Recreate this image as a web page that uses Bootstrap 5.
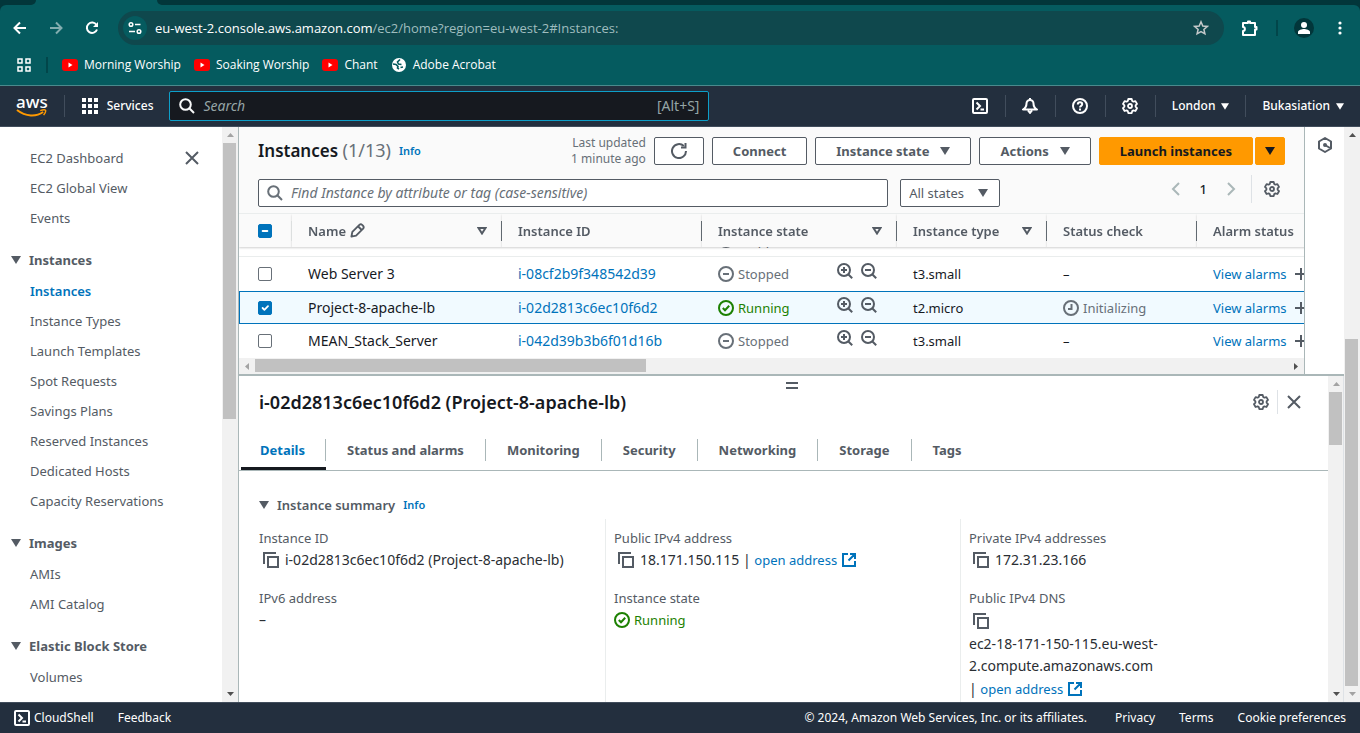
<!DOCTYPE html>
<html lang="en">
<head>
<meta charset="utf-8">
<meta name="viewport" content="width=device-width, initial-scale=1">
<title>Instances | EC2 | eu-west-2</title>
<link href="https://cdn.jsdelivr.net/npm/bootstrap@5.3.0/dist/css/bootstrap.min.css" rel="stylesheet">
<style>
:root { --ink:#16191f; --slate:#545b64; --muted:#687078; --blue:#0073bb; --line:#eaeded; --navy:#232f3e; --teal:#055b5f; --teal-dark:#02363a; }
body { font:13px/22px "Noto Sans", sans-serif; color:var(--ink); background:#fff; }
a { text-decoration:none; color:var(--blue); }
svg { flex:none; display:block; }
.ic { width:16px; height:16px; fill:none; stroke:currentColor; stroke-width:2; }
.ic-thin { stroke-width:1.5; }
.plain { background:none; border:0; padding:0; color:inherit; display:inline-flex; align-items:center; justify-content:center; }

/* Browser chrome */
.chrome { background:var(--teal-dark); color:#fff; font:12px/16px "Open Sans", sans-serif; }
.strip { height:5px; background:var(--teal); }
.strip-start { width:36px; background:var(--teal-dark); border-bottom-right-radius:5px; }
.strip-gap { width:121px; }
.strip-rest { background:var(--teal-dark); border-bottom-left-radius:5px; }
.chrome-body { background:var(--teal); border-radius:6px 6px 0 0; border-bottom:1px solid #4a8a8d; }
.toolbar { height:46px; padding:0 12px; }
.toolbar .plain { width:36px; }
.toolbar .reload { width:34px; }
.toolbar .menu { width:26px; }
.omnibox { height:34px; background:#0f484d; border-radius:17px; padding:0 15px 0 5px; }
.site-chip { width:24px; height:24px; border-radius:50%; background:var(--teal); }
.url { font-size:13px; color:#9fbdbf; }
.url b { color:#fff; font-weight:400; }
.star { color:#c5c9ca; }
.vbar { width:2px; height:16px; background:#02464a; }
.bookmarks { height:34px; padding:0 16px 6px; }
.bookmarks .vbar { margin:0 14px; }
.bookmarks a { color:#fff; display:flex; align-items:center; gap:6px; margin-right:13px; }

/* Console header */
.console-bar { --bs-border-color:#414d5c; height:41px; background:var(--navy); border-bottom:1px solid #414d5c; color:#fff; font-size:12px; font-weight:500; }
.console-bar .cell { height:22px; border-right:1px solid #414d5c; }
.console-bar .tool { width:50px; }
.console-bar .tri { width:8px; height:7px; }
.console-bar .pick { gap:6px; padding:0 16px; }
.logo-word { font:500 17px/14px "Noto Sans", sans-serif; }
.global-search { height:30px; background:var(--ink); border:1px solid #0d9fc9; border-radius:2px; padding:0 9px; max-width:540px; color:#95a5a6; font-size:14px; font-weight:400; }
.global-search input { background:none; border:0; outline:0; color:#fff; font-style:italic; min-width:0; padding:0; }
.global-search input::placeholder { color:#95a5a6; }

/* Side navigation */
.side { width:222px; padding-top:16px; }
.side a, .side-head { line-height:30px; display:block; }
.side a { padding-left:30px; color:var(--slate); }
.side a.current { color:var(--blue); font-weight:600; }
.side-head { margin-top:11px; height:32px; line-height:32px; padding-left:11px; font-weight:700; color:var(--slate); }
.side-close { width:16px; height:16px; margin:7px 22px 0 0; }

/* Scroll bars */
.sbar { background:#f1f1f1; color:#505050; }
.sbar-v { width:16px; }
.sbar-h { height:16px; }
.thumb { background:#c1c1c1; }
.sbar-v .thumb { margin:0 1px; width:13px; }
.sbar-h .thumb { margin:1px 0; height:13px; }
.arrow { width:16px; height:16px; display:flex; align-items:center; justify-content:center; }
.arrow svg { width:7px; height:4px; fill:currentColor; }
.arrow.side-way svg { width:4px; height:7px; }
.dim { color:#a3a3a3; }

/* Instance table */
.workspace { border-left:1px solid #aab7b8; }
.list-pane { background:#fafafa; border-right:1px solid #aab7b8; }
.rail { width:39px; padding-top:10px; }
.list-title { font-size:17px; line-height:24px; font-weight:600; margin:0 0 2px 3px; }
.list-title span { color:var(--muted); font-weight:400; font-size:18px; }
.info { font-size:11px; font-weight:600; }
.stamp { font-size:12px; line-height:16px; color:var(--muted); text-align:right; }
.cbtn { height:28px; border:1px solid var(--slate); border-radius:2px; background:#fff; color:var(--slate); font-size:13px; font-weight:700; padding:0 20px; line-height:20px; display:flex; align-items:center; justify-content:center; gap:11px; white-space:nowrap; }
.cbtn:hover, .cbtn:active { border-color:var(--slate); background:#fafafa; color:var(--slate); }
.cbtn-launch { background:#f90; border-color:#f90; color:var(--ink); }
.cbtn-square { width:50px; padding:0; }
.cbtn-more { width:30px; padding:0; }
.launch-pair { gap:2px; margin-right:3px; }
.tri { width:10px; height:8px; fill:currentColor; }
.tri-open { width:10px; height:8px; fill:none; stroke:currentColor; stroke-width:2; }
.filter { width:61%; height:28px; margin-left:3px; border:1px solid var(--slate); border-radius:2px; background:#fff; padding:0 8px; color:var(--muted); font-size:14px; }
.filter input { border:0; outline:0; padding:0; min-width:0; font-style:italic; color:var(--ink); }
.filter input::placeholder { color:var(--muted); }
.state-select { width:100px; height:28px; margin-left:12px; border:1px solid var(--slate); border-radius:2px; padding:0 8px; font-size:13px; line-height:20px; color:var(--slate); background-image:url("data:image/svg+xml,%3Csvg xmlns='http://www.w3.org/2000/svg' viewBox='0 0 10 8'%3E%3Cpath fill='%23545b64' d='M0 0h10L5 8z'/%3E%3C/svg%3E"); background-size:10px 8px; background-position:right 11px center; }
.pages { margin-top:-4px; }
.pages .step { color:#aab7b8; }
.pages .prefs { height:28px; }
.grid-scroll { height:145px; margin-top:6px; overflow:hidden; background:#fff; border-top:1px solid var(--line); }
.inst { width:100%; min-width:1158px; table-layout:fixed; border-collapse:separate; border-spacing:0; }
.inst th { position:sticky; top:0; z-index:2; height:33px; padding:0; background:#fafafa; color:var(--slate); font-weight:600; box-shadow:0 1px 2px #00000030; }
.inst th > div { height:20px; border-right:1px solid var(--muted); padding:0 14px 0 16px; line-height:20px; }
.inst th:first-child > div { border-color:var(--line); padding-left:19px; }
.inst td { height:34px; padding:0 0 0 16px; border-bottom:1px solid transparent; white-space:nowrap; }
.inst td:first-child { padding-left:19px; }
.inst td:nth-child(2), .inst td:nth-child(3) { font-size:14px; }
.inst tr.gone td { border-color:var(--line); }
.inst tr.picked td { height:33px; background:#f1faff; border-top:1px solid var(--blue); border-bottom:1px solid var(--blue); }
.inst tr.picked td:first-child { border-left:1px solid var(--blue); padding-left:18px; }
.inst .form-check-input { width:14px; height:14px; margin:0; border:1px solid var(--muted); border-radius:2px; display:block; }
.inst .form-check-input:checked, .inst .form-check-input:indeterminate { background-color:var(--blue); border-color:var(--blue); }
.pencil { width:15px; height:15px; }
.plus-mark { width:12px; }
.status { display:flex; align-items:center; gap:4px; color:var(--muted); }
.running { color:#1d8102; }
.state-tools { margin-left:auto; padding-right:20px; color:var(--slate); }
.slate { color:var(--slate); }

/* Split panel */
.panel { border-top:2px solid #aab7b8; background:#fff; }
.panel-head { padding:0 26px 8px 20px; }
.panel-head .plain { height:24px; }
.panel-title { font-size:18px; line-height:24px; font-weight:600; margin:0; }
.handle { width:12px; height:7px; border-top:2px solid var(--slate); border-bottom:2px solid var(--slate); }
.handle-row { padding:6px 0 1px 16px; }
.tabs { border-bottom:1px solid #aab7b8; padding-left:2px; }
.tabs .nav-link { color:var(--slate); font-weight:700; padding:9px 0 6px; border-bottom:3px solid transparent; line-height:22px; border-radius:0; }
.tabs .nav-link span { display:block; padding:0 21px; border-right:1px solid #aab7b8; }
.tabs .nav-link.active { color:var(--blue); border-bottom-color:var(--ink); }
.tabs .nav-link.active span { padding:0 20px 0 19px; }
.tabs .nav-item:last-child span { border:0; }
.sum-head { padding:23px 20px 3px; }
.facts { padding:0 13px 0 11px; }
.facts .col-4 { padding:8px 8px 0; border-left:1px solid var(--line); }
.facts .col-4:first-child { border-color:transparent; }
.facts dt { font-weight:400; color:var(--slate); }
.facts dd { margin:0 0 16px; color:#2a2e33; font-size:14px; }
.facts dd a, .facts dd .status { font-size:13px; }
.facts .copy { margin:0 6px 0 4px; color:var(--slate); }
.facts .val { display:flex; align-items:center; min-height:22px; }
.facts .val-tall { min-height:24px; }

/* Footer */
.foot { height:31px; background:var(--navy); color:#fff; font-size:12px; border-top:1px solid #414d5c; padding:0 14px; }
.foot a { color:#fff; }
</style>
</head>
<body class="vh-100 d-flex flex-column overflow-hidden">
<svg width="0" height="0" class="position-absolute" aria-hidden="true">
  <symbol id="gear" viewBox="0 0 16 16"><path stroke-linejoin="round" stroke-width="1.800" d="M6.300 1h3.400l.5 2 1.200.7 2-.6 1.600 2.800-1.400 1.500v1.300l1.400 1.500-1.600 2.800-2-.6-1.200.7-.5 2H6.300l-.5-2-1.200-.7-2 .6L1 10.200l1.400-1.500V7.400L1 5.900l1.600-2.800 2 .6L5.800 3z"/><circle cx="8" cy="8" r="2" stroke-width="1.800"/></symbol>
  <symbol id="lens" viewBox="0 0 16 16"><circle cx="6.500" cy="6.500" r="5.300"/><path d="M10.300 10.300 15 15"/></symbol>
  <symbol id="zin" viewBox="0 0 16 16"><circle cx="7" cy="7" r="6"/><path d="m11.200 11.200 4 4M7 4v6M4 7h6"/></symbol>
  <symbol id="zout" viewBox="0 0 16 16"><circle cx="7" cy="7" r="6"/><path d="m11.200 11.200 4 4M4 7h6"/></symbol>
  <symbol id="stop" viewBox="0 0 16 16"><circle cx="8" cy="8" r="7"/><path d="M5 8h6"/></symbol>
  <symbol id="ok" viewBox="0 0 16 16"><circle cx="8" cy="8" r="7"/><path d="m4.800 8 2.200 2.200 4.200-4.400"/></symbol>
  <symbol id="wait" viewBox="0 0 16 16"><circle cx="8" cy="8" r="7"/><path d="M8.500 4v5H5"/></symbol>
  <symbol id="x" viewBox="0 0 16 16"><path d="m2 2 12 12M14 2 2 14"/></symbol>
  <symbol id="copy" viewBox="0 0 16 16"><path d="M1 12V1h12"/><path d="M5 5h10v10H5z"/></symbol>
  <symbol id="ext" viewBox="0 0 16 16"><path d="M7 2H2v12h12V9M9 2h5v5M14 2 7.500 8.500"/></symbol>
  <symbol id="plus" viewBox="0 0 12 12"><path d="M6 0v12M0 6h12"/></symbol>
  <symbol id="tri" viewBox="0 0 10 8"><path d="M0 0h10L5 8z"/></symbol>
  <symbol id="triopen" viewBox="0 0 10 8"><path d="M1.500 1h7L5 6.500z"/></symbol>
  <symbol id="shell" viewBox="0 0 16 16"><rect x="1" y="1" width="14" height="14" rx="1"/><path d="m4.500 4.500 3.500 3.500-3.500 3.500M8.500 11.500H12"/></symbol>
  <symbol id="yt" viewBox="0 0 16 12"><rect width="16" height="12" rx="3" fill="#f00"/><path fill="#fff" d="M6.500 3.500v5l4-2.500z"/></symbol>
  <symbol id="up" viewBox="0 0 7 4"><path d="M3.500 0 7 4H0z"/></symbol>
  <symbol id="down" viewBox="0 0 7 4"><path d="M0 0h7L3.500 4z"/></symbol>
</svg>

<header class="chrome flex-shrink-0">
  <div class="strip d-flex"><div class="strip-start"></div><div class="strip-gap"></div><div class="strip-rest flex-fill"></div></div>
  <div class="chrome-body">
    <div class="toolbar d-flex align-items-center">
      <button class="plain justify-content-start" aria-label="Back"><svg class="ic" viewBox="0 0 16 16"><path d="M14 8H3M8 2.500 2.500 8 8 13.500"/></svg></button>
      <button class="plain justify-content-start opacity-50" aria-label="Forward"><svg class="ic" viewBox="0 0 16 16"><path d="M2 8h11M8 2.500 13.500 8 8 13.500"/></svg></button>
      <button class="plain reload justify-content-start" aria-label="Reload"><svg class="ic" viewBox="0 0 16 16"><path d="M13 9.500A5.200 5.200 0 1 1 12.500 5"/><path d="M14 2v5H9z" fill="currentColor" stroke="none"/></svg></button>
      <div class="omnibox d-flex align-items-center flex-fill me-2">
        <span class="site-chip d-flex align-items-center justify-content-center"><svg class="ic ic-thin" viewBox="0 0 16 16"><circle cx="4" cy="4.500" r="1.800"/><path d="M8 4.500h5.500M2 11.500h6"/><circle cx="12" cy="11.500" r="1.800"/></svg></span>
        <span class="url flex-fill ms-2"><b>eu-west-2.console.aws.amazon.com</b>/ec2/home?region=eu-west-2#Instances:</span>
        <svg class="ic ic-thin star" viewBox="0 0 16 16"><path d="m8 1.800 1.800 4.200 4.500.4-3.400 3 1 4.400L8 11.500l-3.900 2.300 1-4.400-3.400-3 4.500-.4z"/></svg>
      </div>
      <button class="plain" aria-label="Extensions"><svg class="ic" viewBox="0 0 16 16"><path stroke-linejoin="round" d="M1 3h5V1.500h2V3h5v4h1.500v2.500H13V15H1v-4c2.500 0 2.500-4 0-4z"/></svg></button>
      <span class="vbar mx-2"></span>
      <button class="plain" aria-label="Profile"><svg width="20" height="20" viewBox="0 0 20 20"><circle cx="10" cy="10" r="10" fill="#02363a"/><circle cx="10" cy="7" r="3" fill="#fff"/><path fill="#fff" d="M4 16v-2c0-2 4-3 6-3s6 1 6 3v2z"/></svg></button>
      <button class="plain menu justify-content-end pe-1" aria-label="Menu"><svg width="8" height="16" viewBox="0 0 8 16" fill="#fff"><circle cx="4" cy="3" r="1.600"/><circle cx="4" cy="8" r="1.600"/><circle cx="4" cy="13" r="1.600"/></svg></button>
    </div>
    <nav class="bookmarks d-flex align-items-center" aria-label="Bookmarks">
      <svg class="ic ic-thin" viewBox="0 0 16 16"><path d="M2 2h4v4H2zM10 2h4v4h-4zM2 10h4v4H2zM10 10h4v4h-4z"/></svg>
      <span class="vbar"></span>
      <a href="#"><svg width="16" height="12"><use href="#yt"/></svg>Morning Worship</a>
      <a href="#"><svg width="16" height="12"><use href="#yt"/></svg>Soaking Worship</a>
      <a href="#"><svg width="16" height="12"><use href="#yt"/></svg>Chant</a>
      <a href="#"><svg width="16" height="14" viewBox="0 0 16 14"><circle cx="8" cy="7" r="7" fill="#fff"/><path d="M9 1.500 6.500 4l1 2 3 .5M2 6l3 .5 2 2-.5 1.500 1.500 1M9.500 9.500l2.500-.5" fill="none" stroke="#055b5f" stroke-width="1.600"/></svg>Adobe Acrobat</a>
    </nav>
  </div>
</header>

<header class="console-bar d-flex align-items-center flex-shrink-0">
  <a href="#" class="cell d-flex align-items-center px-3 text-white" aria-label="AWS home">
    <span class="d-flex flex-column align-items-center"><span class="logo-word">aws</span><svg width="31" height="9" viewBox="0 0 32 9"><path d="M1 1c9 7 20 7 27 2" fill="none" stroke="#f90" stroke-width="2"/><path d="M25 1.500c3-1 5-1 5.500-.3s-.5 3-2 5" fill="none" stroke="#f90" stroke-width="1.500"/></svg></span>
  </a>
  <button class="plain gap-2 mx-3 fw-medium"><svg width="18" height="17" viewBox="0 0 18 17" fill="#fff"><path d="M1 0h4v4H1zM7 0h4v4H7zM13 0h4v4h-4zM1 6h4v4H1zM7 6h4v4H7zM13 6h4v4h-4zM1 12h4v4H1zM7 12h4v4H7zM13 12h4v4h-4z"/></svg>Services</button>
  <label class="global-search d-flex align-items-center flex-fill gap-2"><svg class="ic text-light"><use href="#lens"/></svg><input class="flex-fill" type="search" placeholder="Search" aria-label="Search"><span>[Alt+S]</span></label>
  <div class="d-flex align-items-center ms-auto">
    <button class="plain cell tool border-end" aria-label="CloudShell"><svg class="ic"><use href="#shell"/></svg></button>
    <button class="plain cell tool border-end" aria-label="Notifications"><svg class="ic" viewBox="0 0 16 16"><path stroke-linejoin="round" d="M8 0v2M8 2a3.500 3.500 0 0 0-3.500 3.500C4.500 8 3.500 10 1 11.500h14C12.500 10 11.500 8 11.500 5.500A3.500 3.500 0 0 0 8 2zM6 12.500 8 15l2-2.500"/></svg></button>
    <button class="plain cell tool border-end" aria-label="Help"><svg class="ic" viewBox="0 0 16 16"><circle cx="8" cy="8" r="7"/><path d="M5.800 6.500c0-3 4.400-2.700 4.400-.3C10.200 8 8 7.600 8 9.500M8 10.500v2"/></svg></button>
    <button class="plain cell tool border-end" aria-label="Settings"><svg class="ic"><use href="#gear"/></svg></button>
    <button class="plain cell pick border-end fw-medium">London <svg class="tri"><use href="#tri"/></svg></button>
    <button class="plain pick fw-medium">Bukasiation <svg class="tri"><use href="#tri"/></svg></button>
  </div>
</header>

<div class="d-flex flex-fill overflow-hidden">
  <nav class="side flex-shrink-0 overflow-hidden" aria-label="EC2">
    <button class="plain slate side-close float-end" aria-label="Close navigation"><svg class="ic"><use href="#x"/></svg></button>
    <a href="#">EC2 Dashboard</a>
    <a href="#">EC2 Global View</a>
    <a href="#">Events</a>
    <div class="side-head d-flex align-items-center gap-2"><svg class="tri"><use href="#tri"/></svg>Instances</div>
    <a href="#" class="current">Instances</a>
    <a href="#">Instance Types</a>
    <a href="#">Launch Templates</a>
    <a href="#">Spot Requests</a>
    <a href="#">Savings Plans</a>
    <a href="#">Reserved Instances</a>
    <a href="#">Dedicated Hosts</a>
    <a href="#">Capacity Reservations</a>
    <div class="side-head d-flex align-items-center gap-2"><svg class="tri"><use href="#tri"/></svg>Images</div>
    <a href="#">AMIs</a>
    <a href="#">AMI Catalog</a>
    <div class="side-head d-flex align-items-center gap-2"><svg class="tri"><use href="#tri"/></svg>Elastic Block Store</div>
    <a href="#">Volumes</a>
  </nav>
  <div class="sbar sbar-v flex-shrink-0 d-flex flex-column">
    <span class="arrow dim"><svg><use href="#up"/></svg></span>
    <div class="thumb" style="height:48%"></div>
    <span class="arrow mt-auto"><svg><use href="#down"/></svg></span>
  </div>

  <main class="workspace d-flex flex-column flex-fill overflow-hidden">
    <div class="d-flex flex-shrink-0">
      <section class="list-pane flex-fill overflow-hidden">
        <div class="d-flex align-items-center pt-2 px-3 gap-2">
          <h1 class="list-title">Instances <span>(1/13)</span></h1>
          <a href="#" class="info">Info</a>
          <div class="stamp ms-auto">Last updated<br>1 minute ago</div>
          <button class="btn cbtn cbtn-square" aria-label="Refresh"><svg class="ic" viewBox="0 0 16 16"><path d="M15 8a7 7 0 1 1-2.200-5"/><path d="M10 4.500h4.500V0"/></svg></button>
          <button class="btn cbtn">Connect</button>
          <button class="btn cbtn">Instance state <svg class="tri"><use href="#tri"/></svg></button>
          <button class="btn cbtn">Actions <svg class="tri"><use href="#tri"/></svg></button>
          <div class="d-flex launch-pair">
            <button class="btn cbtn cbtn-launch">Launch instances</button>
            <button class="btn cbtn cbtn-launch cbtn-more" aria-label="More launch options"><svg class="tri"><use href="#tri"/></svg></button>
          </div>
        </div>
        <div class="d-flex align-items-start px-3 mt-2 pt-1">
          <label class="filter d-flex align-items-center gap-2"><svg class="ic"><use href="#lens"/></svg><input class="flex-fill" type="text" placeholder="Find Instance by attribute or tag (case-sensitive)" aria-label="Find instance"></label>
          <select class="form-select state-select" aria-label="Instance state filter"><option>All states</option></select>
          <div class="d-flex align-items-center ms-auto slate me-1 pages">
            <button class="plain step" aria-label="Previous page"><svg class="ic" viewBox="0 0 16 16"><path d="M11 2 5 8l6 6"/></svg></button>
            <span class="fw-medium text-dark px-3">1</span>
            <button class="plain step me-1" aria-label="Next page"><svg class="ic" viewBox="0 0 16 16"><path d="m5 2 6 6-6 6"/></svg></button>
            <button class="plain prefs border-start ps-2 ms-2 me-1" aria-label="Preferences"><svg class="ic ms-1"><use href="#gear"/></svg></button>
          </div>
        </div>
        <div class="grid-scroll" id="grid">
          <table class="inst">
            <colgroup><col style="width:53px"><col style="width:210px"><col style="width:200px"><col style="width:195px"><col style="width:150px"><col style="width:150px"><col></colgroup>
            <thead><tr>
              <th><div class="d-flex align-items-center"><input id="all" class="form-check-input" type="checkbox" aria-label="Select all"></div></th>
              <th><div class="d-flex align-items-center gap-1">Name <svg class="ic pencil" viewBox="0 0 16 16"><path stroke-linejoin="round" d="m1.500 14.500 1-5L10 2q1.500-1.200 3 0l1 1q1.200 1.500 0 3l-7.500 7.500zM8.500 3.500l4 4"/></svg><svg class="tri-open ms-auto"><use href="#triopen"/></svg></div></th>
              <th><div>Instance ID</div></th>
              <th><div class="d-flex align-items-center">Instance state <svg class="tri-open ms-auto"><use href="#triopen"/></svg></div></th>
              <th><div class="d-flex align-items-center">Instance type <svg class="tri-open ms-auto"><use href="#triopen"/></svg></div></th>
              <th><div>Status check</div></th>
              <th><div>Alarm status</div></th>
            </tr></thead>
            <tbody>
              <tr class="gone"><td><input class="form-check-input" type="checkbox" aria-label="Select instance"></td><td></td><td></td><td><span class="status"><svg class="ic"><use href="#stop"/></svg>Stopped</span></td><td></td><td></td><td></td></tr>
              <tr><td><input class="form-check-input" type="checkbox" aria-label="Select Web Server 3"></td><td>Web Server 3</td><td><a href="#">i-08cf2b9f348542d39</a></td><td><span class="d-flex"><span class="status"><svg class="ic"><use href="#stop"/></svg>Stopped</span><span class="state-tools d-flex gap-2"><svg class="ic"><use href="#zin"/></svg><svg class="ic"><use href="#zout"/></svg></span></span></td><td>t3.small</td><td>–</td><td><span class="d-flex align-items-center gap-1"><a href="#">View alarms</a><svg class="ic slate ms-1 plus-mark"><use href="#plus"/></svg></span></td></tr>
              <tr class="picked"><td><input class="form-check-input" type="checkbox" checked aria-label="Select Project-8-apache-lb"></td><td>Project-8-apache-lb</td><td><a href="#">i-02d2813c6ec10f6d2</a></td><td><span class="d-flex"><span class="status running"><svg class="ic"><use href="#ok"/></svg>Running</span><span class="state-tools d-flex gap-2"><svg class="ic"><use href="#zin"/></svg><svg class="ic"><use href="#zout"/></svg></span></span></td><td>t2.micro</td><td><span class="status"><svg class="ic"><use href="#wait"/></svg>Initializing</span></td><td><span class="d-flex align-items-center gap-1"><a href="#">View alarms</a><svg class="ic slate ms-1 plus-mark"><use href="#plus"/></svg></span></td></tr>
              <tr><td><input class="form-check-input" type="checkbox" aria-label="Select MEAN_Stack_Server"></td><td>MEAN_Stack_Server</td><td><a href="#">i-042d39b3b6f01d16b</a></td><td><span class="d-flex"><span class="status"><svg class="ic"><use href="#stop"/></svg>Stopped</span><span class="state-tools d-flex gap-2"><svg class="ic"><use href="#zin"/></svg><svg class="ic"><use href="#zout"/></svg></span></span></td><td>t3.small</td><td>–</td><td><span class="d-flex align-items-center gap-1"><a href="#">View alarms</a><svg class="ic slate ms-1 plus-mark"><use href="#plus"/></svg></span></td></tr>
            </tbody>
          </table>
        </div>
        <div class="sbar sbar-h d-flex">
          <span class="arrow side-way dim"><svg viewBox="0 0 4 7"><path d="M4 0v7L0 3.500z"/></svg></span>
          <div class="thumb" style="width:36.700%"></div>
          <span class="arrow side-way ms-auto"><svg viewBox="0 0 4 7"><path d="M0 0v7l4-3.500z"/></svg></span>
        </div>
      </section>
      <aside class="rail flex-shrink-0 d-flex justify-content-center align-items-start"><button class="plain slate" aria-label="Tools"><svg class="ic" viewBox="0 0 16 16"><path stroke-linejoin="round" d="m8 1 6 3.500v7L8 15l-6-3.500v-7z"/><circle cx="8" cy="8" r="1"/><path d="m8 8 5 3"/></svg></button></aside>
    </div>

    <section class="panel d-flex flex-fill overflow-hidden">
      <div class="flex-fill overflow-hidden">
        <div class="handle-row d-flex justify-content-center"><div class="handle"></div></div>
        <div class="panel-head d-flex align-items-center">
          <h2 class="panel-title">i-02d2813c6ec10f6d2 (Project-8-apache-lb)</h2>
          <div class="d-flex align-items-center ms-auto slate">
            <button class="plain pe-2" aria-label="Panel preferences"><svg class="ic"><use href="#gear"/></svg></button>
            <button class="plain border-start ps-2" aria-label="Close panel"><svg class="ic"><use href="#x"/></svg></button>
          </div>
        </div>
        <ul class="nav tabs mt-2">
          <li class="nav-item"><a class="nav-link active" href="#"><span>Details</span></a></li>
          <li class="nav-item"><a class="nav-link" href="#"><span>Status and alarms</span></a></li>
          <li class="nav-item"><a class="nav-link" href="#"><span>Monitoring</span></a></li>
          <li class="nav-item"><a class="nav-link" href="#"><span>Security</span></a></li>
          <li class="nav-item"><a class="nav-link" href="#"><span>Networking</span></a></li>
          <li class="nav-item"><a class="nav-link" href="#"><span>Storage</span></a></li>
          <li class="nav-item"><a class="nav-link" href="#"><span>Tags</span></a></li>
        </ul>
        <div class="sum-head d-flex align-items-center gap-2 slate fw-semibold"><svg class="tri"><use href="#tri"/></svg>Instance summary <a href="#" class="info">Info</a></div>
        <dl class="facts d-flex mb-0">
          <div class="col-4">
            <dt>Instance ID</dt><dd><span class="val"><svg class="ic copy"><use href="#copy"/></svg>i-02d2813c6ec10f6d2 (Project-8-apache-lb)</span></dd>
            <dt>IPv6 address</dt><dd>–</dd>
          </div>
          <div class="col-4">
            <dt>Public IPv4 address</dt><dd><span class="val"><svg class="ic copy"><use href="#copy"/></svg>18.171.150.115 |&nbsp;<a href="#" class="d-flex align-items-center gap-1">open address <svg class="ic"><use href="#ext"/></svg></a></span></dd>
            <dt>Instance state</dt><dd><span class="status running"><svg class="ic"><use href="#ok"/></svg>Running</span></dd>
          </div>
          <div class="col-4 pb-5">
            <dt>Private IPv4 addresses</dt><dd><span class="val"><svg class="ic copy"><use href="#copy"/></svg>172.31.23.166</span></dd>
            <dt>Public IPv4 DNS</dt><dd><span class="val val-tall"><svg class="ic copy"><use href="#copy"/></svg></span>ec2-18-171-150-115.eu-west-<br>2.compute.amazonaws.com<span class="val val-tall">|&nbsp;<a href="#" class="d-flex align-items-center gap-1">open address <svg class="ic"><use href="#ext"/></svg></a></span></dd>
          </div>
        </dl>
      </div>
      <div class="sbar sbar-v flex-shrink-0 d-flex flex-column border-end">
        <span class="arrow dim"><svg><use href="#up"/></svg></span>
        <div class="thumb" style="height:16.300%"></div>
        <span class="arrow mt-auto"><svg><use href="#down"/></svg></span>
      </div>
    </section>
  </main>
  <div class="sbar sbar-v flex-shrink-0 d-flex flex-column">
    <span class="arrow"><svg><use href="#up"/></svg></span>
    <div class="thumb mt-auto" style="height:60.300%"></div>
    <span class="arrow dim"><svg><use href="#down"/></svg></span>
  </div>
</div>

<footer class="foot d-flex align-items-center flex-shrink-0">
  <button class="plain"><svg class="ic me-1"><use href="#shell"/></svg>CloudShell</button>
  <a href="#" class="ms-4">Feedback</a>
  <span class="ms-auto">© 2024, Amazon Web Services, Inc. or its affiliates.</span>
  <a href="#" class="ms-4 ps-1">Privacy</a>
  <a href="#" class="ms-4">Terms</a>
  <a href="#" class="ms-4">Cookie preferences</a>
</footer>

<script src="https://cdn.jsdelivr.net/npm/bootstrap@5.3.0/dist/js/bootstrap.bundle.min.js"></script>
<script>
  document.getElementById('all').indeterminate = true;
  const grid = document.getElementById('grid');
  grid.scrollTop = grid.scrollHeight;
</script>
</body>
</html>
